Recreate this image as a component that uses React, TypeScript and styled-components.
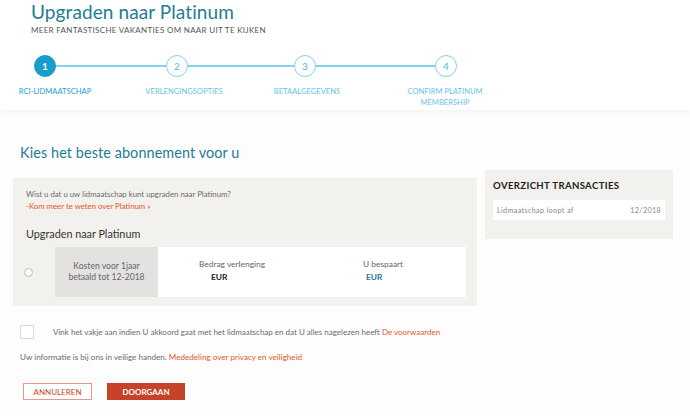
import React from "react";
import styled, { createGlobalStyle } from "styled-components";

const Global = createGlobalStyle`
  html, body { margin: 0; padding: 0; background: #ffffff; }
  body { font-family: "Lato", "Open Sans", sans-serif; color: #333; }
  * { box-sizing: border-box; }
`;

const Page = styled.div`
  width: 690px;
  height: 416px;
  overflow: hidden;
  background: #fdfdfd;
`;

const Header = styled.header`
  height: 110px;
  background: #ffffff;
  box-shadow: 0 3px 6px rgba(0, 0, 0, 0.035);
`;

const Title = styled.h1`
  margin: 0 0 0 31px;
  font-size: 19px;
  line-height: 24px;
  font-weight: 400;
  color: #217e93;
  letter-spacing: 0.1px;
`;

const Subtitle = styled.div`
  margin: 1px 0 0 31px;
  font-size: 8px;
  line-height: 10px;
  color: #555;
  letter-spacing: 0.3px;
`;

const CircleRow = styled.div`
  display: flex;
  align-items: center;
  margin-top: 20px;
  padding-left: 34px;
`;

const Circle = styled.div<{ $active?: boolean }>`
  width: 22px;
  height: 22px;
  border-radius: 50%;
  flex: none;
  display: flex;
  align-items: center;
  justify-content: center;
  font-size: 10px;
  font-weight: ${(p) => (p.$active ? 700 : 400)};
  color: ${(p) => (p.$active ? "#fff" : "#4fb9e0")};
  background: ${(p) => (p.$active ? "#1b9dcc" : "#fff")};
  border: 1.5px solid ${(p) => (p.$active ? "#1b9dcc" : "#7fd2ee")};
`;

const Connector = styled.div<{ $w: number }>`
  width: ${(p) => p.$w}px;
  height: 1.5px;
  background: #83d3ee;
  flex: none;
`;

const LabelRow = styled.div`
  display: flex;
  align-items: flex-start;
  margin-top: 9px;
`;

const StepLabel = styled.div<{ $left: number; $active?: boolean }>`
  width: 100px;
  margin-left: ${(p) => p.$left}px;
  flex: none;
  text-align: center;
  font-size: 7.6px;
  line-height: 11px;
  color: ${(p) => (p.$active ? "#2aa0d3" : "#6cc3e6")};
  text-transform: uppercase;
`;

const Main = styled.main`
  padding: 0;
`;

const Heading = styled.h2`
  margin: 33px 0 0 20px;
  font-size: 14.4px;
  line-height: 20px;
  font-weight: 400;
  color: #1e7e93;
  letter-spacing: 0.1px;
`;

const Columns = styled.div`
  display: flex;
  align-items: flex-start;
  margin-top: 7px;
`;

const LeftPanel = styled.section`
  margin: 8px 0 0 13px;
  width: 464px;
  height: 128px;
  background: #f3f1ed;
  padding: 10px 10px 0 13px;
`;

const Info = styled.div`
  font-size: 7.8px;
  line-height: 12px;
  color: #6b6b6b;
`;

const OrangeLink = styled.a`
  color: #e5561f;
  text-decoration: none;
`;

const Upgrade = styled.div`
  margin-top: 15px;
  font-size: 10.8px;
  line-height: 14px;
  color: #333;
`;

const OptionRow = styled.div`
  display: flex;
  align-items: stretch;
  margin-top: 6px;
  height: 50px;
`;

const RadioCell = styled.div`
  width: 29px;
  display: flex;
  align-items: center;
`;

const Radio = styled.span`
  width: 9px;
  height: 9px;
  border-radius: 50%;
  border: 1px solid #bdbdbd;
  background: #fff;
  margin-left: -2px;
`;

const OptionBox = styled.div`
  flex: none;
  width: 411px;
  display: flex;
  background: #fff;
`;

const CostCell = styled.div`
  width: 103px;
  background: #e3e2e0;
  display: flex;
  align-items: center;
  justify-content: center;
  text-align: center;
  font-size: 8.6px;
  line-height: 11px;
  color: #666;
`;

const ValueCell = styled.div<{ $pad: number }>`
  width: 154px;
  padding: 12px 0 0 ${(p) => p.$pad}px;
  font-size: 8.4px;
  line-height: 11px;
  color: #666;
`;

const Amount = styled.div<{ $teal?: boolean; $indent: number }>`
  margin: 2px 0 0 ${(p) => p.$indent}px;
  font-weight: 700;
  font-size: 8.4px;
  color: ${(p) => (p.$teal ? "#1b7c93" : "#222")};
`;

const RightPanel = styled.aside`
  margin-left: 8px;
  width: 188px;
  height: 69px;
  background: #f3f1ed;
  padding: 10px 8px 0 8px;
`;

const SideTitle = styled.div`
  font-size: 9.6px;
  font-weight: 700;
  line-height: 12px;
  color: #222;
  letter-spacing: 0.35px;
`;

const SideRow = styled.div`
  margin-top: 8px;
  height: 20px;
  background: #fff;
  display: flex;
  align-items: center;
  justify-content: space-between;
  padding: 0 4px;
  font-size: 7.2px;
  letter-spacing: 0.35px;
  color: #888;
`;

const AgreeRow = styled.div`
  display: flex;
  align-items: center;
  margin: 19px 0 0 20px;
`;

const Checkbox = styled.span`
  width: 14px;
  height: 14px;
  border: 1px solid #d9d9d9;
  background: #fff;
  flex: none;
`;

const AgreeText = styled.div`
  margin-left: 19px;
  font-size: 8px;
  color: #6b6b6b;
`;

const Privacy = styled.div`
  margin: 13px 0 0 20px;
  font-size: 8.1px;
  color: #6b6b6b;
`;

const Buttons = styled.div`
  display: flex;
  gap: 15px;
  margin: 21px 0 0 23px;
`;

const Button = styled.button<{ $primary?: boolean }>`
  height: 17px;
  width: ${(p) => (p.$primary ? 78 : 69)}px;
  padding: 0;
  font-family: inherit;
  font-size: 8px;
  font-weight: ${(p) => (p.$primary ? 700 : 400)};
  color: ${(p) => (p.$primary ? "#fff" : "#c8432b")};
  background: ${(p) => (p.$primary ? "#c6432a" : "#fff")};
  border: 1px solid ${(p) => (p.$primary ? "#c6432a" : "#e39a8c")};
  cursor: pointer;
`;

const steps = [
  { n: 1, label: "RCI-LIDMAATSCHAP", left: 5 },
  { n: 2, label: "VERLENGINGSOPTIES", left: 29 },
  { n: 3, label: "BETAALGEGEVENS", left: 23 },
  { n: 4, label: "CONFIRM PLATINUM MEMBERSHIP", left: 38 },
];
const connectors = [110, 106, 119];

export default function App() {
  return (
    <Page>
      <Global />
      <Header>
        <Title>Upgraden naar Platinum</Title>
        <Subtitle>MEER FANTASTISCHE VAKANTIES OM NAAR UIT TE KIJKEN</Subtitle>
        <CircleRow>
          {steps.map((s, i) => (
            <React.Fragment key={s.n}>
              <Circle $active={i === 0}>{s.n}</Circle>
              {i < connectors.length && <Connector $w={connectors[i]} />}
            </React.Fragment>
          ))}
        </CircleRow>
        <LabelRow>
          {steps.map((s, i) => (
            <StepLabel key={s.n} $left={s.left} $active={i === 0}>
              {s.label}
            </StepLabel>
          ))}
        </LabelRow>
      </Header>
      <Main>
        <Heading>Kies het beste abonnement voor u</Heading>
        <Columns>
          <LeftPanel>
            <Info>
              Wist u dat u uw lidmaatschap kunt upgraden naar Platinum?
              <br />
              <OrangeLink href="#">-Kom meer te weten over Platinum »</OrangeLink>
            </Info>
            <Upgrade>Upgraden naar Platinum</Upgrade>
            <OptionRow>
              <RadioCell>
                <Radio />
              </RadioCell>
              <OptionBox>
                <CostCell>
                  Kosten voor 1jaar
                  <br />
                  betaald tot 12-2018
                </CostCell>
                <ValueCell $pad={41}>
                  Bedrag verlenging
                  <Amount $indent={12}>EUR</Amount>
                </ValueCell>
                <ValueCell $pad={51}>
                  U bespaart
                  <Amount $indent={3} $teal>
                    EUR
                  </Amount>
                </ValueCell>
              </OptionBox>
            </OptionRow>
          </LeftPanel>
          <RightPanel>
            <SideTitle>OVERZICHT TRANSACTIES</SideTitle>
            <SideRow>
              <span>Lidmaatschap loopt af</span>
              <span>12/2018</span>
            </SideRow>
          </RightPanel>
        </Columns>
        <AgreeRow>
          <Checkbox />
          <AgreeText>
            Vink het vakje aan indien U akkoord gaat met het lidmaatschap en dat U alles nagelezen heeft{" "}
            <OrangeLink href="#">De voorwaarden</OrangeLink>
          </AgreeText>
        </AgreeRow>
        <Privacy>
          Uw informatie is bij ons in veilige handen.{" "}
          <OrangeLink href="#">Mededeling over privacy en veiligheid</OrangeLink>
        </Privacy>
        <Buttons>
          <Button>ANNULEREN</Button>
          <Button $primary>DOORGAAN</Button>
        </Buttons>
      </Main>
    </Page>
  );
}
